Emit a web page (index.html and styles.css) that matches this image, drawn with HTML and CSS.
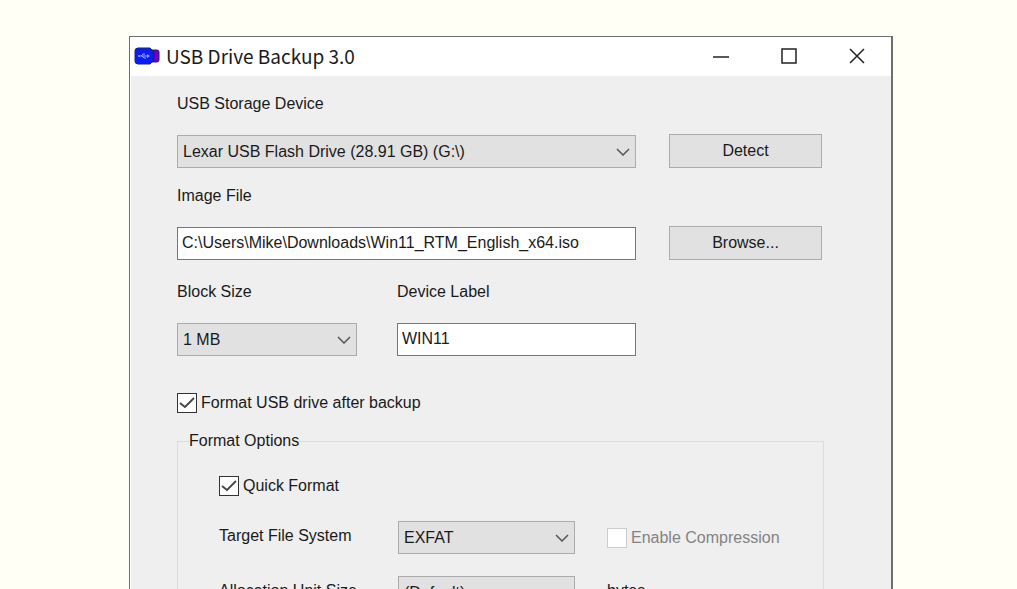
FILE: index.html
```html
<!DOCTYPE html>
<html lang="en">
<head>
<meta charset="utf-8">
<title>USB Drive Backup 3.0</title>
<link rel="stylesheet" href="styles.css">
</head>
<body>
<main class="window">
  <header class="titlebar">
    <svg class="app-icon" width="26" height="20" viewBox="0 0 26 20" aria-hidden="true">
      <path d="M17 4h6q2 0 2 2v8q0 2-2 2h-6z" fill="#4a00d0" stroke="#3a1470"/>
      <path d="M21 5h3v10h-3z" fill="#7a00b0"/>
      <path d="M4 2h12l3 3v10l-3 3H4q-3 0-3-3V5q0-3 3-3z" fill="#0a1cff" stroke="#15246e"/>
      <path d="M5 10h9M7 10l2-2h2M8 10l2 2h2" fill="none" stroke="#9aa2ff"/>
      <circle cx="5" cy="10" r="1" fill="#9aa2ff"/>
      <path d="M13 8l3 2-3 2z" fill="#9aa2ff"/>
    </svg>
    <h1 class="title">USB Drive Backup 3.0</h1>
    <div class="controls">
      <button class="control" type="button" aria-label="Minimize"><svg width="16" height="16" viewBox="0 0 16 16"><path d="M0 9h16"/></svg></button>
      <button class="control" type="button" aria-label="Maximize"><svg width="16" height="16" viewBox="0 0 16 16"><path d="M1 1h14v14H1z"/></svg></button>
      <button class="control" type="button" aria-label="Close"><svg width="16" height="16" viewBox="0 0 16 16"><path d="M1 1l14 14M15 1L1 15"/></svg></button>
    </div>
  </header>
  <form class="form">
    <div class="row">
      <div class="field">
        <label for="device">USB Storage Device</label>
        <div class="select">
          <select id="device"><option>Lexar USB Flash Drive (28.91 GB) (G:\)</option></select>
          <svg class="chevron" width="14" height="8" viewBox="0 0 14 8"><path d="M1 1l6 6 6-6"/></svg>
        </div>
      </div>
      <button class="button" type="button">Detect</button>
    </div>
    <div class="row row-file">
      <div class="field">
        <label for="image">Image File</label>
        <input class="text" id="image" type="text" value="C:\Users\Mike\Downloads\Win11_RTM_English_x64.iso">
      </div>
      <button class="button" type="button">Browse...</button>
    </div>
    <div class="row row-label">
      <div class="pair">
        <div class="field">
          <label for="block">Block Size</label>
          <div class="select">
            <select id="block"><option>1 MB</option></select>
            <svg class="chevron" width="14" height="8" viewBox="0 0 14 8"><path d="M1 1l6 6 6-6"/></svg>
          </div>
        </div>
        <div class="field">
          <label for="label">Device Label</label>
          <input class="text" id="label" type="text" value="WIN11">
        </div>
      </div>
    </div>
    <label class="check check-format">
      <span class="box"><input type="checkbox" checked><svg class="tick" width="20" height="20" viewBox="0 0 20 20"><path d="M3 10l5 4 9-9"/></svg></span>
      Format USB drive after backup
    </label>
    <fieldset class="options">
      <legend>Format Options</legend>
      <label class="check">
        <span class="box"><input type="checkbox" checked><svg class="tick" width="20" height="20" viewBox="0 0 20 20"><path d="M3 10l5 4 9-9"/></svg></span>
        Quick Format
      </label>
      <div class="grid">
        <label class="name" for="system">Target File System</label>
        <div class="select">
          <select id="system"><option>EXFAT</option></select>
          <svg class="chevron" width="14" height="8" viewBox="0 0 14 8"><path d="M1 1l6 6 6-6"/></svg>
        </div>
        <label class="check disabled">
          <span class="box"><input type="checkbox" disabled></span>
          Enable Compression
        </label>
        <label class="name" for="unit">Allocation Unit Size</label>
        <div class="select">
          <select id="unit"><option>(Default)</option></select>
          <svg class="chevron" width="14" height="8" viewBox="0 0 14 8"><path d="M1 1l6 6 6-6"/></svg>
        </div>
        <span class="name unit">bytes</span>
      </div>
    </fieldset>
  </form>
</main>
</body>
</html>
```
FILE: styles.css
```css
* { box-sizing: border-box; }
html { height: 100%; overflow: hidden; }
body {
  margin: 0;
  height: 100%;
  overflow: hidden;
  padding: 36px 124px 0 129px;
  background: #fffff6;
  color: #1a1a1a;
  font: 16px/20px "Liberation Sans", Arial, sans-serif;
}
.window {
  border: 1px solid #6e6e6e;
  border-right-width: 2px;
  background: #fff;
}
.titlebar {
  display: flex;
  align-items: center;
  height: 39px;
  padding: 0 0 2px 4px;
}
.title {
  margin: 0 auto 0 6px;
  font: 19px/24px "Noto Sans CJK SC", "Noto Sans", sans-serif;
}
.controls { display: flex; }
.control {
  display: grid;
  place-items: center;
  width: 68px;
  height: 37px;
  padding: 0;
  border: 0;
  background: none;
}
.control svg { fill: none; stroke: #222; stroke-width: 1.5; }
.form {
  margin-left: 1px;
  padding: 18px 67px 48px 46px;
  background: #efefef;
}
.row {
  display: grid;
  grid-template-columns: minmax(0, 1fr) 153px;
  column-gap: 33px;
  align-items: end;
  padding-right: 2px;
}
.row-file { margin-top: 18px; }
.row-label { margin-top: 22px; }
.pair {
  display: grid;
  grid-template-columns: 180px minmax(0, 1fr);
  column-gap: 40px;
}
.field { display: grid; row-gap: 21px; }
.select { display: grid; align-items: center; }
.select > * { grid-area: 1 / 1; }
select, .text, .button {
  margin: 0;
  width: 100%;
  height: 33px;
  border-radius: 0;
  color: #1a1a1a;
  font: inherit;
}
select {
  appearance: none;
  padding: 0 32px 0 5px;
  border: 1px solid #acacac;
  background: #e1e1e1;
}
.chevron {
  justify-self: end;
  margin-right: 6px;
  fill: none;
  stroke: #555;
  stroke-width: 1.5;
  pointer-events: none;
}
.text {
  padding: 0 4px 2px;
  border: 1px solid #777;
  background: #fff;
}
.button {
  height: 34px;
  padding: 0;
  border: 1px solid #acacac;
  background: #e1e1e1;
}
.check { display: flex; align-items: center; gap: 4px; }
.check-format { margin: 37px 0 18px; }
.box { display: grid; }
.box > * { grid-area: 1 / 1; }
.box input {
  appearance: none;
  width: 20px;
  height: 20px;
  margin: 0;
  border: 1px solid #333;
  background: #fff;
}
.tick {
  fill: none;
  stroke: #444;
  stroke-width: 1.8;
  pointer-events: none;
}
.disabled { color: #838383; }
.box input:disabled { border-color: #ccc; }
.options {
  min-width: 0;
  margin: 0;
  padding: 25px 24px 24px 41px;
  border: 1px solid #dcdcdc;
}
.options legend { margin-left: -30px; padding: 0; }
.grid {
  display: grid;
  grid-template-columns: 179px 177px 1fr;
  row-gap: 22px;
  align-items: center;
  margin-top: 25px;
}
.name { padding-bottom: 3px; }
.grid .check, .unit { margin-left: 32px; }
```
